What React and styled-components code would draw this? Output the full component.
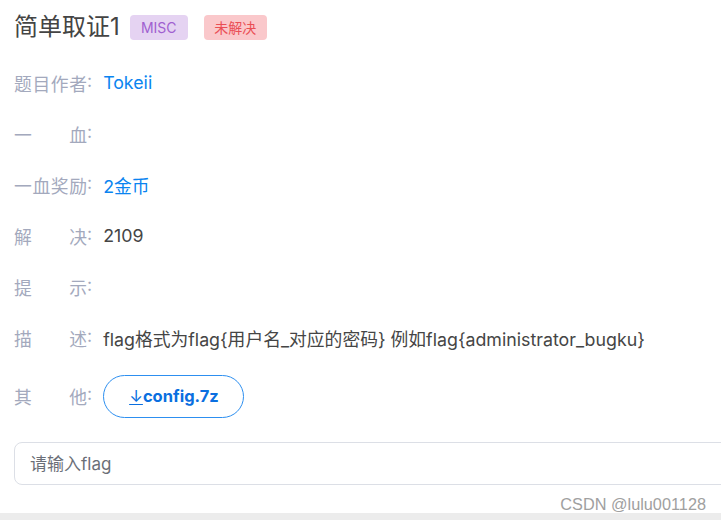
import React from "react";
import styled, { createGlobalStyle } from "styled-components";

const Global = createGlobalStyle`
  html, body { margin: 0; padding: 0; background: #fff; }
  body { font-family: Inter, "Noto Sans CJK SC", sans-serif; overflow: hidden; }
`;

const Page = styled.div`
  width: 721px;
  height: 520px;
  position: relative;
  overflow: hidden;
  background: #fff;
`;

const Content = styled.div`
  padding: 12px 0 0 14px;
  display: flex;
  flex-direction: column;
`;

const TitleRow = styled.div`
  display: flex;
  align-items: center;
  height: 30px;
`;

const Title = styled.h1`
  margin: 0;
  font-size: 24px;
  font-weight: 400;
  color: #444;
  line-height: 30px;
`;

const Badge = styled.span`
  display: inline-flex;
  align-items: center;
  justify-content: center;
  height: 25px;
  width: ${(p) => p.$w}px;
  margin-left: ${(p) => p.$ml}px;
  border-radius: 4px;
  font-size: 14px;
  background: ${(p) => p.$bg};
  color: ${(p) => p.$fg};
`;

const Rows = styled.div`
  display: flex;
  flex-direction: column;
  margin-top: 15px;
`;

const Row = styled.div`
  display: flex;
  align-items: center;
  height: ${(p) => p.$h || 51}px;
  font-size: 17.8px;
`;

const Label = styled.span`
  display: flex;
  color: #a3a9bd;
  margin-right: 11px;
  white-space: nowrap;
`;

const LabelText = styled.span`
  width: 73px;
  text-align: justify;
  text-align-last: justify;
`;

const Value = styled.span`
  color: ${(p) => (p.$blue ? "#0a84f0" : "#454545")};
`;

const DownloadBtn = styled.a`
  display: inline-flex;
  align-items: center;
  height: 43px;
  box-sizing: border-box;
  padding: 0 24px 0 25px;
  border: 1px solid #2d8ff0;
  border-radius: 22px;
  color: #0a6fe0;
  font-weight: 700;
  font-size: 16.5px;
  text-decoration: none;
`;

const Arrow = styled.span`
  font-weight: 400;
  text-decoration: underline;
  text-underline-offset: 2px;
`;

const Input = styled.input`
  margin-top: 13px;
  width: 740px;
  height: 43px;
  box-sizing: border-box;
  border: 1px solid #dcdfe6;
  border-radius: 8px;
  padding: 0 15px;
  font-size: 17px;
  font-family: Inter, "Noto Sans CJK SC", sans-serif;
  outline: none;
  &::placeholder { color: #6b6f78; }
`;

const Footer = styled.div`
  position: absolute;
  left: 0;
  right: 0;
  bottom: 0;
  height: 7px;
  background: #ececec;
`;

const Watermark = styled.div`
  position: absolute;
  right: 15px;
  bottom: 8px;
  line-height: 16px;
  font-family: "Liberation Sans", Arial, sans-serif;
  font-size: 16.3px;
  color: #a0a0a0;
`;

const rows = [
  { label: "题目作者", value: "Tokeii", blue: true },
  { label: "一血", value: "" },
  { label: "一血奖励", value: "2金币", blue: true },
  { label: "解决", value: "2109" },
  { label: "提示", value: "" },
  { label: "描述", value: "flag格式为flag{用户名_对应的密码} 例如flag{administrator_bugku}" },
];

export default function App() {
  return (
    <Page>
      <Global />
      <Content>
        <TitleRow>
          <Title>简单取证1</Title>
          <Badge $bg="#e5d3f2" $fg="#a05fd0" $w={58} $ml={10}>MISC</Badge>
          <Badge $bg="#fac8cb" $fg="#ea4f55" $w={63} $ml={16}>未解决</Badge>
        </TitleRow>
        <Rows>
          {rows.map((r) => (
            <Row key={r.label}>
              <Label>
                <LabelText>{r.label}</LabelText>:
              </Label>
              <Value $blue={r.blue}>{r.value}</Value>
            </Row>
          ))}
          <Row $h={66}>
            <Label>
              <LabelText>其他</LabelText>:
            </Label>
            <DownloadBtn href="#">
              <Arrow>↓</Arrow>config.7z
            </DownloadBtn>
          </Row>
        </Rows>
        <Input placeholder="请输入flag" />
      </Content>
      <Watermark>CSDN @lulu001128</Watermark>
      <Footer />
    </Page>
  );
}
